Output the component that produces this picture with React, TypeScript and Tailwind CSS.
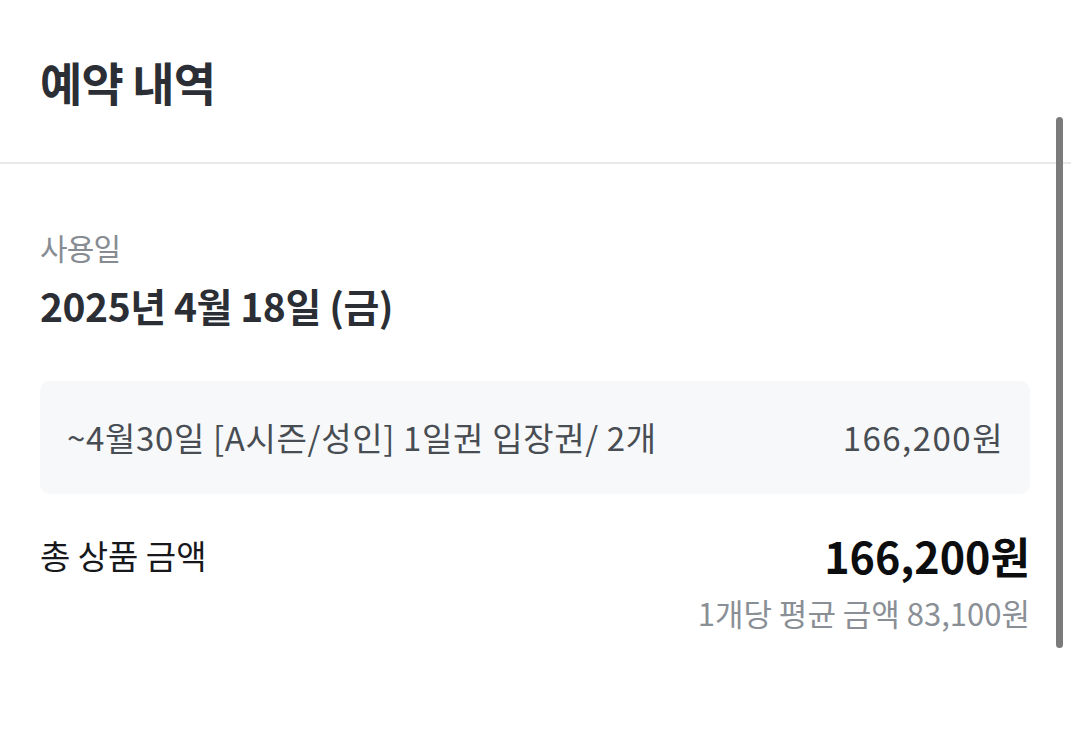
const font = "font-['Noto_Sans_CJK_KR','Noto_Sans',sans-serif]";

export default function App() {
  return (
    <div className={`relative w-[1071px] h-[750px] bg-white overflow-hidden ${font}`}>
      <header className="h-[164px] flex items-center px-[40px] border-b-2 border-[#e8e9eb]">
        <h1 className="text-[46px] font-bold tracking-[-0.02em] text-[#2b2f35] leading-none">예약 내역</h1>
      </header>

      <section className="px-[40px] pr-[41px]">
        <div className="mt-[68px] text-[30px] leading-none tracking-[-0.03em] text-[#878c93]">사용일</div>
        <div className="mt-[24px] text-[39px] font-semibold leading-none tracking-[-0.012em] text-[#2b2f35]">
          2025년 4월 18일 (금)
        </div>

        <div className="mt-[56px] h-[113px] rounded-[10px] bg-[#f7f8fa] flex items-center justify-between pl-[27px] pr-[27px] text-[33px] leading-none text-[#484d53]">
          <span className="tracking-[0.02em]">~4월30일 [A시즌/성인] 1일권 입장권/ 2개</span>
          <span className="tracking-[0.045em] -mr-[1px]">166,200원</span>
        </div>

        <div className="mt-[40px] flex items-center justify-between">
          <span className="text-[33px] leading-none text-[#16181b]">총 상품 금액</span>
          <span className="text-[43px] font-bold leading-none text-[#0c0d0f]">166,200원</span>
        </div>
        <div className="mt-[20px] text-right text-[31px] leading-none text-[#8a8f96]">
          1개당 평균 금액 83,100원
        </div>
      </section>

      <div className="absolute left-[1056px] top-[117px] w-[7px] h-[531px] rounded-full bg-[#7b7b7b]" />
    </div>
  );
}
